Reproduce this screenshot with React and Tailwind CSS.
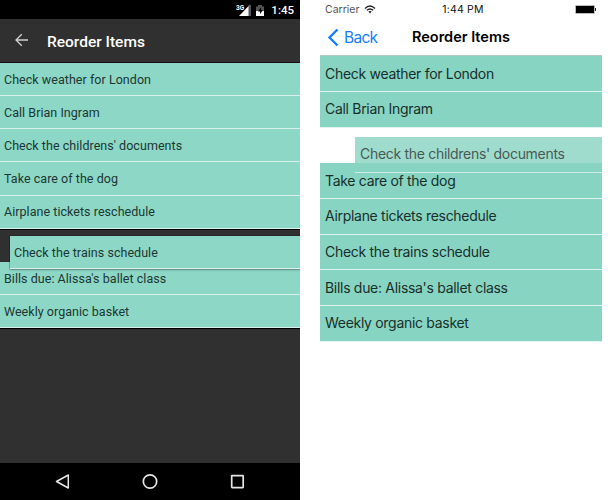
const android = ["Check weather for London", "Call Brian Ingram", "Check the childrens' documents", "Take care of the dog", "Airplane tickets reschedule"];
const ios = ["Airplane tickets reschedule", "Check the trains schedule", "Bills due: Alissa's ballet class", "Weekly organic basket"];

function AndroidRow({ text, className = "" }) {
  return (
    <div className={"flex h-[33.2px] shrink-0 items-center border-b border-[#d9f3ec] bg-[#8cd7c6] pt-[2px] pl-1 text-[12.5px] tracking-[0.04px] text-[#1c3832] " + className}>
      <span>{text}</span>
    </div>
  );
}

function IosRow({ text, className = "" }) {
  return (
    <div className={"flex h-[35.7px] shrink-0 items-center border-b border-[#dff4ee] bg-[#88d4c3] pb-px pl-[5px] text-[14px] tracking-[-0.3px] text-[#17302a] " + className}>
      <span>{text}</span>
    </div>
  );
}

function AndroidPhone() {
  return (
    <section className="flex h-[500px] w-[300px] flex-col overflow-hidden bg-[#303030] font-['Roboto',sans-serif]">
      <div className="flex h-[19px] shrink-0 items-center justify-end bg-black pr-1.5 text-white">
        <svg width="34" height="18" viewBox="0 0 34 18" className="mr-[3px]">
          <path d="M16 3.5V15H5Z" fill="#fff" />
          <path d="M14.5 4H17V15H14.5Z" fill="#555" />
          <text x="2" y="8.5" fontSize="6.5" fontWeight="700" fill="#fff" stroke="#000" strokeWidth="1.5" paintOrder="stroke">3G</text>
          <path d="M22 5.5H24V4H28V5.5H30V15H22Z" fill="#555" />
          <path d="M22 10H30V15H22Z" fill="#fff" />
          <path d="M27 6L24 10.5H26V13L29 9H27Z" fill="#000" />
        </svg>
        <span className="pt-[2px] text-[11.5px] font-medium">1:45</span>
      </div>
      <div className="flex h-[43.8px] shrink-0 items-center border-b border-[#180a0e] pl-[15px] text-white">
        <svg width="14" height="14" viewBox="0 0 14 14" fill="none" stroke="#d0d0d0" strokeWidth="1.3">
          <path d="M6.8 1.2L1 7L6.8 12.8M1 7H13" />
        </svg>
        <h1 className="ml-[18px] pt-[4px] text-[15.5px] font-medium">Reorder Items</h1>
      </div>
      {android.map((text) => <AndroidRow key={text} text={text} />)}
      <div className="relative h-[33.2px] shrink-0 border-t border-black">
        <AndroidRow text="Check the trains schedule" className="absolute top-[6.5px] left-[10px] z-10 w-[290px] text-[#0c201b] shadow-[0_0_1px_#200,0_1px_2px_rgba(0,0,0,0.25)]" />
      </div>
      <AndroidRow text="Bills due: Alissa's ballet class" />
      <AndroidRow text="Weekly organic basket" />
      <div className="grow border-t border-black" />
      <div className="flex h-[37px] shrink-0 items-center justify-between bg-black px-[54px]">
        <svg width="16" height="18" viewBox="0 0 16 18" fill="none" stroke="#e6e6e6" strokeWidth="1.5"><path d="M14.3 2V15L2.5 8.5Z" strokeLinejoin="round" /></svg>
        <svg width="18" height="18" viewBox="0 0 18 18" fill="none" stroke="#e6e6e6" strokeWidth="1.7"><circle cx="10" cy="8.5" r="6.7" /></svg>
        <svg width="18" height="18" viewBox="0 0 18 18" fill="none" stroke="#e6e6e6" strokeWidth="1.7"><rect x="3.7" y="2.6" width="11.5" height="12" rx=".5" /></svg>
      </div>
    </section>
  );
}

function IosPhone() {
  return (
    <section className="flex h-[500px] w-[282px] flex-col overflow-hidden bg-white font-['Inter',sans-serif]">
      <div className="grid h-[18px] shrink-0 grid-cols-3 items-center pr-[5px] pl-[5px] text-[10.5px] text-[#111]">
        <div className="flex items-center gap-[5px] pt-px text-[#555]">
          <span>Carrier</span>
          <svg width="12" height="9" viewBox="0 0 12 9" fill="none" stroke="#222" strokeWidth="1.4">
            <path d="M1 3.4Q6-1.2 11 3.4M2.8 5.3Q6 2.5 9.2 5.3" />
            <path d="M4.3 6.6Q6 5.4 7.7 6.6L6 8.5Z" fill="#222" stroke="none" />
          </svg>
        </div>
        <span className="pt-px pl-1 text-center tracking-[0.2px]">1:44 PM</span>
        <svg className="justify-self-end" width="22" height="9" viewBox="0 0 22 9">
          <rect x=".5" y=".5" width="19" height="8" rx="1" fill="#000" stroke="#bbb" />
          <path d="M20 3H21V6H20Z" fill="#222" />
        </svg>
      </div>
      <div className="grid h-[38.3px] shrink-0 grid-cols-[92px_1fr] items-center border-b border-[#b8c8c4]">
        <div className="flex items-center gap-[5px] pt-px pl-[7px] text-[15.5px] tracking-[-0.7px] text-[#167efb]">
          <svg width="12" height="19" viewBox="0 0 12 19" fill="none" stroke="#167efb" strokeWidth="2.4"><path d="M10.5 1.5L2.5 9.5L10.5 17.5" /></svg>
          <span>Back</span>
        </div>
        <h1 className="pt-px text-[14.5px] font-semibold text-black">Reorder Items</h1>
      </div>
      <IosRow text="Check weather for London" />
      <IosRow text="Call Brian Ingram" />
      <div className="relative h-[35.7px] shrink-0">
        <IosRow text="Check the childrens' documents" className="absolute top-[9.2px] left-[35px] z-10 w-[247px] opacity-80" />
      </div>
      <IosRow text="Take care of the dog" />
      {ios.map((text) => <IosRow key={text} text={text} />)}
    </section>
  );
}

export default function App() {
  return (
    <main className="flex h-[500px] w-full gap-5 overflow-hidden bg-white">
      <AndroidPhone />
      <IosPhone />
    </main>
  );
}
